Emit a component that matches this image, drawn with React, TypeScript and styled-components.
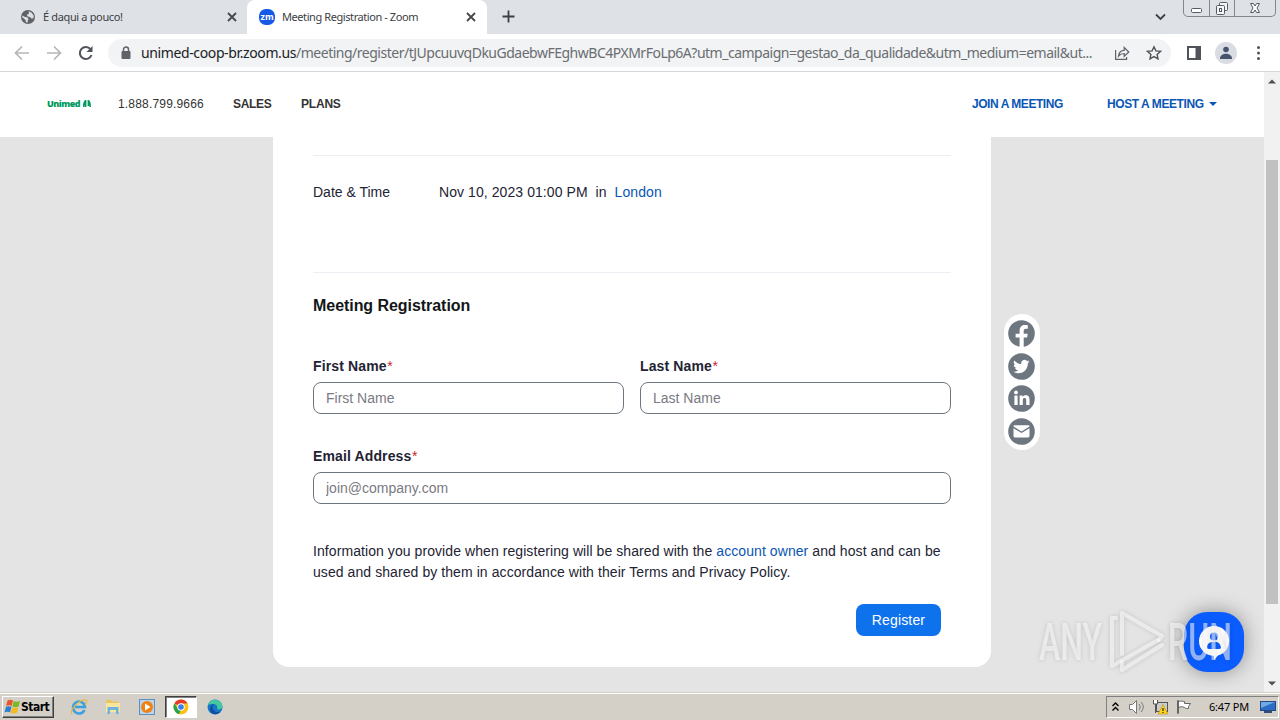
import React from "react";
import styled, { createGlobalStyle } from "styled-components";

const Global = createGlobalStyle`
  * { box-sizing: border-box; }
  body { margin: 0; overflow: hidden; font-family: "Liberation Sans", Arial, sans-serif; }
  svg { display: block; flex: none; }
`;

const ui = `"Noto Sans", "Open Sans", sans-serif`;

const Screen = styled.div`
  width: 1280px;
  height: 720px;
  display: flex;
  flex-direction: column;
  overflow: hidden;
  background: #fff;
`;

/* Browser chrome */
const TabStrip = styled.div`
  height: 34px;
  flex: none;
  display: flex;
  background: #dee1e6;
`;
const Tab = styled.div<{ $active?: boolean }>`
  width: ${(p) => (p.$active ? 240 : 247)}px;
  height: 34px;
  padding: 0 ${(p) => (p.$active ? "11px 0 12px" : "10px 0 20px")};
  display: flex;
  align-items: center;
  background: ${(p) => (p.$active ? "#fff" : "transparent")};
  border-radius: 8px 8px 0 0;
`;
const TabTitle = styled.span<{ $spacing: number }>`
  flex: 1;
  margin-left: 7px;
  font: 11px/16px ${ui};
  letter-spacing: ${(p) => p.$spacing}px;
  color: #3c4043;
  white-space: nowrap;
`;
const StripSpacer = styled.div`
  flex: 1;
`;
const NewTab = styled.div`
  padding: 10px 0 0 15px;
`;
const TabSearch = styled.div`
  padding: 13px 17px 0 0;
`;
const WindowButtons = styled.div`
  width: 93px;
  height: 17px;
  margin-right: 4px;
  display: flex;
  border: 1px solid #83868c;
  border-top: 0;
  border-radius: 0 0 5px 5px;
`;
const WindowButton = styled.div<{ $width: number }>`
  width: ${(p) => p.$width}px;
  display: flex;
  justify-content: center;
  & + & { border-left: 1px solid #83868c; }
`;
const Toolbar = styled.div`
  height: 38px;
  flex: none;
  display: flex;
  align-items: center;
  padding: 0 0 0 14px;
  border-bottom: 1px solid #d6d7da;
`;
const NavIcons = styled.div`
  display: flex;
  flex: none;
  gap: 16px;
  width: 94px;
`;
const AddressBar = styled.div`
  flex: none;
  width: 1063px;
  height: 28px;
  display: flex;
  align-items: center;
  padding: 0 9px 0 12px;
  border-radius: 14px;
  background: #f1f3f4;
`;
const Url = styled.div`
  flex: 1;
  margin-left: 9px;
  display: flex;
  font: 14px/20px ${ui};
  color: #6a6d71;
  white-space: nowrap;
`;
const Host = styled.span`
  color: #202124;
  letter-spacing: -0.38px;
`;
const Path = styled.span`
  letter-spacing: -0.495px;
`;
const AddressActions = styled.div`
  display: flex;
  gap: 16px;
`;
const ToolbarActions = styled.div`
  display: flex;
  align-items: center;
  gap: 14px;
  margin-left: 16px;
`;

/* Web page */
const Viewport = styled.div`
  height: 620px;
  flex: none;
  display: flex;
`;
const Page = styled.div`
  position: relative;
  width: 1264px;
  background: #e4e4e4;
`;
const Header = styled.header`
  height: 65px;
  display: flex;
  align-items: center;
  padding: 0 47px 2px;
  background: #fff;
  font-size: 12px;
  line-height: 16px;
  color: #333;
  white-space: nowrap;
`;
const Brand = styled.div`
  width: 71px;
  display: flex;
  align-items: center;
  gap: 3px;
  font: 800 9px/12px "Open Sans", sans-serif;
  letter-spacing: -0.5px;
  color: #00995d;
`;
const Phone = styled.span`
  width: 115px;
  letter-spacing: 0.18px;
`;
const MenuItem = styled.span<{ $width: number; $spacing?: number }>`
  width: ${(p) => p.$width}px;
  font-weight: 700;
  letter-spacing: ${(p) => p.$spacing ?? 0}px;
`;
const HeaderLinks = styled.div`
  display: flex;
  align-items: center;
  margin-left: auto;
  color: #0956b5;
`;
const Card = styled.main`
  width: 718px;
  height: 530px;
  margin-left: 273px;
  padding: 18px 40px 0;
  background: #fff;
  border-radius: 0 0 16px 16px;
  font-size: 14px;
  letter-spacing: 0.075px;
  color: #232333;
`;
const DateRow = styled.div`
  display: flex;
  height: 118px;
  padding-top: 26px;
  border: solid #ededf4;
  border-width: 1px 0;
  line-height: 20px;
  white-space: pre;
`;
const DateLabel = styled.span`
  width: 126px;
  letter-spacing: 0;
`;
const Link = styled.span`
  color: #0956b5;
`;
const Title = styled.h1`
  margin: 21px 0 38px;
  font-size: 16px;
  line-height: 24px;
  letter-spacing: -0.05px;
  color: #131619;
`;
const Fields = styled.div`
  display: grid;
  grid-template-columns: 1fr 1fr;
  gap: 32px 16px;
`;
const Field = styled.label<{ $wide?: boolean }>`
  display: flex;
  flex-direction: column;
  gap: 6px;
  grid-column: ${(p) => (p.$wide ? "1 / -1" : "auto")};
  font-weight: 700;
  line-height: 20px;
  letter-spacing: 0.13px;
`;
const Required = styled.span`
  margin-left: 0.5px;
  color: #c9252d;
  font-weight: 400;
`;
const Input = styled.input`
  height: 32px;
  padding: 0 12px;
  border: 1px solid #6e7680;
  border-radius: 8px;
  outline: 0;
  background: #fff;
  font: 14px "Liberation Sans", Arial, sans-serif;
  letter-spacing: 0;
  &::placeholder { color: #7a7a82; opacity: 1; }
`;
const Notice = styled.p`
  margin: 37px 0 21px;
  line-height: 21px;
  white-space: nowrap;
`;
const Register = styled.button`
  display: block;
  width: 85px;
  height: 32px;
  margin: 0 10px 0 auto;
  padding: 0;
  border: 0;
  border-radius: 8px;
  background: #0e72ed;
  color: #fff;
  font: 14px "Liberation Sans", Arial, sans-serif;
  letter-spacing: 0.15px;
`;
const Social = styled.div`
  position: absolute;
  left: 1004px;
  top: 242px;
  width: 36px;
  height: 136px;
  padding: 6px 6px 5px 4px;
  display: flex;
  flex-direction: column;
  align-items: center;
  justify-content: space-between;
  border-radius: 18px;
  background: #fff;
`;
const ChatButton = styled.div`
  position: absolute;
  left: 1184px;
  top: 540px;
  width: 60px;
  height: 60px;
  display: grid;
  place-items: center;
  border-radius: 23px;
  background: #0b5cff;
  box-shadow: 0 0 20px rgba(0, 0, 0, 0.38);
`;
const Watermark = styled.svg`
  position: absolute;
  left: 1030px;
  top: 528px;
  overflow: visible;
  filter: drop-shadow(0 0 2px rgba(0, 0, 0, 0.25));
`;
const Scrollbar = styled.div`
  width: 16px;
  display: flex;
  flex-direction: column;
  align-items: center;
  padding-top: 7px;
  background: #f1f1f1;
`;
const Thumb = styled.div`
  width: 12px;
  height: 444px;
  margin: 76px 0 77px;
  background: #c1c1c1;
`;

/* Taskbar */
const Taskbar = styled.div`
  height: 28px;
  flex: none;
  display: flex;
  align-items: center;
  padding: 2px 1px 0 2px;
  background: #d4d0c8;
  box-shadow: inset 0 1px #d4d0c8, inset 0 2px #fff;
`;
const Start = styled.div`
  width: 52px;
  height: 22px;
  display: flex;
  align-items: center;
  padding-left: 1px;
  border: 1px solid;
  border-color: #fff #404040 #404040 #fff;
  box-shadow: inset -1px -1px #808080;
  font: 700 12px/16px "DejaVu Sans Condensed", "DejaVu Sans", sans-serif;
  letter-spacing: -0.5px;
  color: #000;
`;
const Apps = styled.div`
  display: flex;
  align-items: center;
  margin-left: 8px;
`;
const Launcher = styled.div<{ $active?: boolean }>`
  width: ${(p) => (p.$active ? 32 : 34)}px;
  height: 22px;
  margin: 0 ${(p) => (p.$active ? 1 : 0)}px;
  display: grid;
  place-items: center;
  ${(p) =>
    p.$active &&
    "background:#fff;border:1px solid;border-color:#404040 #fff #fff #404040;box-shadow:inset 1px 1px #808080;"}
`;
const Tray = styled.div`
  margin-left: auto;
  width: 173px;
  height: 22px;
  display: flex;
  align-items: center;
  padding-left: 5px;
  border: 1px solid;
  border-color: #808080 #fff #fff #808080;
`;
const TrayIcon = styled.div<{ $gap: number }>`
  margin-left: ${(p) => p.$gap}px;
`;
const Clock = styled.span`
  width: 51px;
  margin-left: 16px;
  font: 11px/16px ${ui};
  letter-spacing: -0.2px;
  color: #000;
  white-space: nowrap;
`;

const Close = () => (
  <svg width="10" height="10" viewBox="0 0 10 10" stroke="#45494d" strokeWidth="1.8">
    <path d="M1 1l8 8M9 1l-8 8" />
  </svg>
);

const socialIcons = [
  <path key="f" fill="#fff" d="M11.600 27v-9.400H7.600v-3.900h4v-2.900c0-3.900 2.200-5.800 5.400-5.800 1.400 0 2.400.2 2.800.3v3.500h-1.800c-1.700 0-2.300.9-2.300 2v2.900h4l-.6 3.900h-3.400V27z" />,
  <path key="t" fill="#fff" transform="translate(5.200 5.400) scale(.68)" d="M23.950 4.570a10 10 0 0 1-2.820.770 4.960 4.960 0 0 0 2.160-2.720c-.950.550-2 .950-3.130 1.180a4.920 4.920 0 0 0-8.380 4.480C7.690 8.100 4.070 6.130 1.640 3.160a4.930 4.930 0 0 0 1.520 6.570 4.900 4.900 0 0 1-2.230-.610v.060a4.920 4.920 0 0 0 3.950 4.830 5 5 0 0 1-2.210.080 4.940 4.940 0 0 0 4.600 3.420A9.870 9.870 0 0 1 0 19.540 13.990 13.990 0 0 0 7.550 21.750c9.050 0 14-7.500 14-13.980 0-.210 0-.420-.020-.630a9.940 9.940 0 0 0 2.460-2.550z" />,
  <g key="l" fill="#fff"><circle cx="8" cy="7.400" r="1.900" /><path d="M6.400 10.500h3.200v9.500H6.400zM11.600 10.500h3v1.300c.6-1 1.700-1.600 3-1.600 3.200 0 3.900 2 3.900 4.600v5.200h-3.300v-4.700c0-1.100 0-2.400-1.600-2.400s-1.800 1.200-1.800 2.400v4.700h-3.200z" /></g>,
  <g key="m" fill="#fff"><path d="M5.500 8.600c0-.8.500-1.300 1.300-1.300h13.400c.8 0 1.300.5 1.300 1.300l-8 4.800z" /><path d="M5.500 10.200l8 4.800 8-4.800v7.900c0 .8-.6 1.400-1.400 1.400H6.900c-.8 0-1.400-.6-1.400-1.400z" /></g>,
];

export default function App() {
  return (
    <Screen>
      <Global />
      <TabStrip>
        <Tab>
          <svg width="16" height="16" viewBox="0 0 16 16">
            <circle cx="8" cy="8" r="7" fill="#5f6368" />
            <path fill="#dee1e6" d="M2.300 6.500l2.800 1.500 2.200.3 1.300 1.800-.9 1.400v2.300l-1.900-.8-.3-2.100-1.600-1.400-1.600-.9zM8.700 2.300l3 1.400 2 3-.2 2.600-2.100.2-1.500-1.600-2.200-.3-1-1.800 2.200-1.100z" />
          </svg>
          <TabTitle $spacing={-0.35}>É daqui a pouco!</TabTitle>
          <Close />
        </Tab>
        <Tab $active>
          <svg width="16" height="16" viewBox="0 0 16 16">
            <rect width="16" height="16" rx="7" fill="#1559e8" />
            <text x="1.600" y="10.600" fontFamily="Open Sans, sans-serif" fontSize="8.500" fontWeight="700" fill="#fff" textLength="13" lengthAdjust="spacingAndGlyphs">zm</text>
          </svg>
          <TabTitle $spacing={-0.42}>Meeting Registration - Zoom</TabTitle>
          <Close />
        </Tab>
        <NewTab>
          <svg width="13" height="13" stroke="#3c4043" strokeWidth="1.800"><path d="M6.500 .5v12M.5 6.500h12" /></svg>
        </NewTab>
        <StripSpacer />
        <TabSearch>
          <svg width="11" height="8" fill="none" stroke="#3c4043" strokeWidth="1.800"><path d="M1 1.500l4.500 4.500L10 1.500" /></svg>
        </TabSearch>
        <WindowButtons>
          <WindowButton $width={25}>
            <svg width="14" height="16" fill="#fff" stroke="#555b66"><rect x="2.500" y="8.500" width="10" height="4" rx="1" /></svg>
          </WindowButton>
          <WindowButton $width={26}>
            <svg width="14" height="16" fill="#f4f5f7" stroke="#555b66"><rect x="4.500" y="2.500" width="8" height="8" rx="1" /><rect x="1.500" y="5.500" width="8" height="9" rx="1" /><rect x="4.500" y="8.500" width="2" height="3" /></svg>
          </WindowButton>
          <WindowButton $width={41}>
            <svg width="14" height="16" fill="#fff" stroke="#555b66"><path d="M2.500 3.500h3L7 6l1.500-2.500h3L9 8l2.500 4.500h-3L7 10l-1.500 2.500h-3L5 8z" /></svg>
          </WindowButton>
        </WindowButtons>
      </TabStrip>

      <Toolbar>
        <NavIcons>
          <svg width="16" height="16" fill="none" stroke="#b4b6b9" strokeWidth="1.700"><path d="M15 8H2M8 1.500L1.500 8L8 14.500" /></svg>
          <svg width="16" height="16" fill="none" stroke="#b4b6b9" strokeWidth="1.700"><path d="M1 8h13M8 1.500L14.500 8L8 14.500" /></svg>
          <svg width="16" height="16" fill="none" stroke="#50545a" strokeWidth="2"><path d="M13.500 10A6 6 0 1 1 12.500 4.200" /><path d="M14.500 1v6h-6z" fill="#50545a" stroke="none" /></svg>
        </NavIcons>
        <AddressBar>
          <svg width="12" height="14" fill="none"><rect x="1.500" y="5" width="9" height="8" rx="1" fill="#5f6368" /><path d="M3.500 5.500V3.500a2.500 2.500 0 0 1 5 0v2" stroke="#5f6368" strokeWidth="1.500" /></svg>
          <Url>
            <Host>unimed-coop-br.zoom.us</Host>
            <Path>/meeting/register/tJUpcuuvqDkuGdaebwFEghwBC4PXMrFoLp6A?utm_campaign=gestao_da_qualidade&amp;utm_medium=email&amp;ut...</Path>
          </Url>
          <AddressActions>
            <svg width="16" height="16" fill="none" stroke="#5f6368" strokeWidth="1.200"><path d="M1.600 5v9.400h11V12M4.500 11c.5-3.800 2.500-5.700 5.700-5.700V2.500L14.800 7l-4.600 4.300V8.500C7.700 8.500 6 9.200 4.500 11z" /></svg>
            <svg width="16" height="16" fill="none" stroke="#50545a" strokeWidth="1.400"><path d="M8 1.800l1.900 4.100 4.500.5-3.300 3 .9 4.400L8 11.600l-4 2.200.9-4.400-3.300-3 4.500-.5z" /></svg>
          </AddressActions>
        </AddressBar>
        <ToolbarActions>
          <svg width="14" height="14"><path fill="#50545a" fillRule="evenodd" d="M0 0h14v14H0zM2 2v10h6.500V2z" /></svg>
          <svg width="22" height="22"><circle cx="11" cy="11" r="11" fill="#dadce3" /><circle cx="11" cy="7.500" r="2.800" fill="#47546e" /><path fill="#47546e" d="M5 16.500c0-6.500 12-6.500 12 0v.5H5z" /></svg>
          <svg width="16" height="16" fill="#50545a"><circle cx="7.500" cy="2.500" r="1.500" /><circle cx="7.500" cy="8" r="1.500" /><circle cx="7.500" cy="13.500" r="1.500" /></svg>
        </ToolbarActions>
      </Toolbar>

      <Viewport>
        <Page>
          <Header>
            <Brand>
              Unimed
              <svg width="8" height="7" viewBox="0 0 8 7" fill="#00995d"><path d="M0 7C0 3 1 0 2.600 0h.8v7H2V4.500L1.500 7zM4.600 0h.8C7 0 8 3 8 7H6.500L6 4.500V6H4.600z" /></svg>
            </Brand>
            <Phone>1.888.799.9666</Phone>
            <MenuItem $width={68} $spacing={-0.3}>SALES</MenuItem>
            <MenuItem $width={60} $spacing={-0.2}>PLANS</MenuItem>
            <HeaderLinks>
              <MenuItem $width={135} $spacing={-0.45}>JOIN A MEETING</MenuItem>
              <MenuItem $width={102} $spacing={-0.42}>HOST A MEETING</MenuItem>
              <svg width="8" height="5" fill="#0956b5"><path d="M0 1h8l-4 4z" /></svg>
            </HeaderLinks>
          </Header>
          <Card>
            <DateRow>
              <DateLabel>Date &amp; Time</DateLabel>
              <span>Nov 10, 2023 01:00 PM  in  <Link>London</Link></span>
            </DateRow>
            <Title>Meeting Registration</Title>
            <Fields>
              <Field><span>First Name<Required>*</Required></span><Input placeholder="First Name" /></Field>
              <Field><span>Last Name<Required>*</Required></span><Input placeholder="Last Name" /></Field>
              <Field $wide><span>Email Address<Required>*</Required></span><Input placeholder="join@company.com" /></Field>
            </Fields>
            <Notice>
              Information you provide when registering will be shared with the <Link>account owner</Link> and host and can be
              <br />
              used and shared by them in accordance with their Terms and Privacy Policy.
            </Notice>
            <Register>Register</Register>
          </Card>
          <Social>
            {socialIcons.map((icon, i) => (
              <svg key={i} width="27" height="27" viewBox="0 0 27 27"><circle cx="13.500" cy="13.500" r="13.300" fill="#6e7680" />{icon}</svg>
            ))}
          </Social>
          <ChatButton>
            <svg width="32" height="38" viewBox="0 0 32 38">
              <path fill="#fff" d="M16 3a15 15 0 0 1 4 29.500L16 37v-4A15 15 0 0 1 16 3z" />
              <circle cx="16" cy="13.500" r="4" fill="#0b5cff" /><path fill="#0b5cff" d="M9 24c0-7 14-7 14 0 0 1-.500 2-2 2H11c-1.500 0-2-1-2-2z" />
            </svg>
          </ChatButton>
          <Watermark width="210" height="80" viewBox="0 0 210 80">
            <g fill="#fff" fillOpacity=".55" fontFamily="Roboto, sans-serif" fontSize="52" fontWeight="500">
              <text x="9" y="59.500" textLength="63" lengthAdjust="spacingAndGlyphs">ANY</text>
              <text x="138" y="59.500" textLength="64" lengthAdjust="spacingAndGlyphs">RUN</text>
            </g>
            <g fill="none" stroke="#fff" strokeOpacity=".55" strokeWidth="4" strokeLinejoin="round" strokeLinecap="round">
              <path d="M92 54V13l40 23-3 4" /><path d="M86 18h-4v48l46-26" /><path d="M92 62v8l40-25" />
            </g>
          </Watermark>
        </Page>
        <Scrollbar>
          <svg width="8" height="5" fill="#505050"><path d="M0 4.500L4 .5l4 4z" /></svg>
          <Thumb />
          <svg width="8" height="5" fill="#505050"><path d="M0 .5h8l-4 4z" /></svg>
        </Scrollbar>
      </Viewport>

      <Taskbar>
        <Start>
          <svg width="17" height="16" viewBox="0 0 16 16">
            <path fill="#e8562a" d="M3 1.500c2-1 3.700-.8 5.500 0L7.200 7c-1.700-.9-3.500-.9-5.500 0z" />
            <path fill="#7ab829" d="M9.200 2c2 .9 4 .9 6.300 0l-1.400 5.500c-2.200.9-4.200.9-6.200 0z" />
            <path fill="#2b7fd3" d="M1.500 7.800c2-.9 3.800-.9 5.500 0l-1.400 5.500c-1.700-.9-3.500-.9-5.500 0z" />
            <path fill="#f5b81e" d="M7.700 8.300c2 .9 4 .9 6.200 0l-1.400 5.500c-2.200.9-4.200.9-6.200 0z" />
          </svg>
          Start
        </Start>
        <Apps>
          <Launcher>
            <svg width="18" height="18" viewBox="0 0 18 18" fill="none"><path d="M14.500 12A6 6 0 1 1 15 9H5" stroke="#3aa0e0" strokeWidth="2.600" /><path d="M2 16C-1 12 10 1 16 2c2 1 0 4-1 5" stroke="#e8b93c" strokeWidth="1.200" /></svg>
          </Launcher>
          <Launcher>
            <svg width="16" height="16" viewBox="0 0 16 16"><path fill="#e9c65b" d="M1 1h5l1 1.500h7V13H1z" /><path fill="#f7e6a0" d="M1 4h14v9H1z" /><path fill="#6db3dc" d="M2.500 8h11v7H11v-4H5v4H2.500z" /></svg>
          </Launcher>
          <Launcher>
            <svg width="16" height="16" viewBox="0 0 16 16"><rect x=".5" y=".5" width="15" height="15" fill="#b9d5ee" stroke="#5e8fc0" /><circle cx="8" cy="8" r="6" fill="#f08214" /><path fill="#fff" d="M6 4.500v7L11.500 8z" /></svg>
          </Launcher>
          <Launcher $active>
            <svg width="16" height="16" viewBox="0 0 16 16"><circle cx="8" cy="8" r="7.500" fill="#fbc116" /><path fill="#e33b2e" d="M8 8L1.500 4.200A7.500 7.500 0 0 1 14.500 4.500H8z" /><path fill="#2ba24c" d="M1.500 4.200L5 10l3 1-2 4.200A7.500 7.500 0 0 1 1.500 4.200z" /><circle cx="8" cy="8" r="3.700" fill="#fff" /><circle cx="8" cy="8" r="2.800" fill="#3b7ded" /></svg>
          </Launcher>
          <Launcher>
            <svg width="16" height="16" viewBox="0 0 16 16"><circle cx="8" cy="8" r="7.500" fill="#1677c9" /><path fill="#43c8a0" d="M1 6C3-1 14-1 15.500 7c0 3-3.500 4-5.500 3 1-2 0-5-4-5-2 0-4 0-5 1z" /><path fill="#0f4f9c" d="M5.500 8c0 4 4 6 8 4.500C10 17 3 15.500 3 10c0-3 2-5 4-5-1 .8-1.500 1.800-1.500 3z" /></svg>
          </Launcher>
        </Apps>
        <Tray>
          <svg width="7" height="12" fill="none" stroke="#000" strokeWidth="1.400"><path d="M.5 5l3-3 3 3M.5 9.500l3-3 3 3" /></svg>
          <TrayIcon $gap={9}>
            <svg width="18" height="16" fill="none" stroke="#777"><path fill="#fff" d="M1.500 5.500h3l4-4v13l-4-4h-3z" /><path d="M11 5c1.500 2 1.500 4 0 6M13 3c3 3 3 7 0 10" /></svg>
          </TrayIcon>
          <TrayIcon $gap={6}>
            <svg width="17" height="16"><rect x="4.500" y="3.500" width="11" height="9" fill="#ccc" stroke="#555" /><path d="M1.500 1v4h4V1M3.500 5v9" fill="#fff" stroke="#555" /><path fill="#ffd21f" stroke="#b08500" strokeWidth=".5" d="M11 5.500l5 9.500H6z" /><path d="M11 9v3M11 13v1" stroke="#000" /></svg>
          </TrayIcon>
          <TrayIcon $gap={7}>
            <svg width="17" height="16" fill="#fff" stroke="#666"><path d="M1.500 1.500h1v13h-1zM2.500 2.500c3-1 4 0 6 0v2h6l-2 3 0 2c-2 0-3 0-4-1-2-1-4-1-6 0z" /></svg>
          </TrayIcon>
          <Clock>6:47 PM</Clock>
          <svg width="16" height="14"><rect x=".5" y="1.500" width="15" height="9" fill="#2b6cc4" stroke="#244a84" /><path fill="#6fa9e6" d="M1 2h14L1 8z" /><path fill="#334d78" d="M4 11h8v2H4z" /></svg>
        </Tray>
      </Taskbar>
    </Screen>
  );
}
